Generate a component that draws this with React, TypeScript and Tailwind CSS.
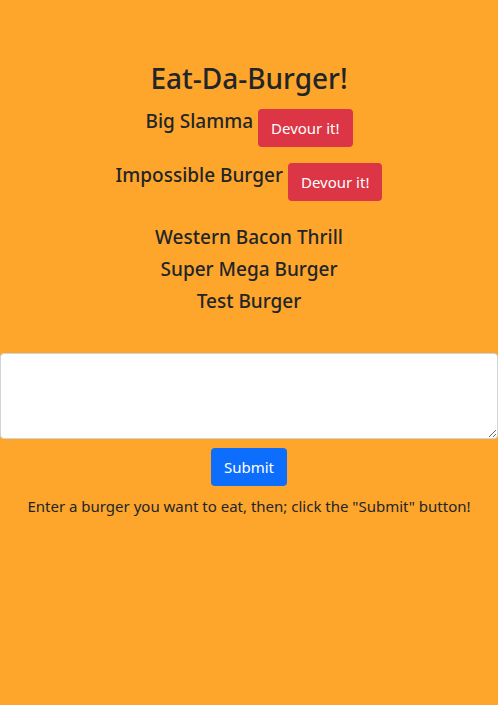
import React from "react";

const eaten = ["Western Bacon Thrill", "Super Mega Burger", "Test Burger"];
const uneaten = ["Big Slamma", "Impossible Burger"];

export default function App() {
  return (
    <div
      className="min-h-[705px] bg-[#fea62b] text-[#212529] text-center pt-[58px]"
      style={{ fontFamily: '"Noto Sans", "Open Sans", sans-serif' }}
    >
      <h1 className="text-[28px] leading-[40px] font-medium mb-[11px]">Eat-Da-Burger!</h1>
      <div>
        {uneaten.map((b) => (
          <div key={b} className="flex justify-center items-start mb-[16px]">
            <span className="text-[19px] leading-[24px] font-medium">{b}</span>
            <button className="ml-[5px] bg-[#dc3545] text-white text-[15px] leading-[24px] px-[13px] py-[7px] rounded-[4px]">
              Devour it!
            </button>
          </div>
        ))}
      </div>
      <div className="mt-[20px]">
        {eaten.map((b) => (
          <div key={b} className="text-[19px] leading-[32px] font-medium">
            {b}
          </div>
        ))}
      </div>
      <div className="mt-[36px]">
        <textarea className="block w-full h-[86px] bg-white border border-[#ced4da] rounded-[4px]" />
        <button className="mt-[9px] bg-[#0d6efd] text-white text-[15px] leading-[24px] px-[13px] py-[7px] rounded-[4px]">
          Submit
        </button>
        <p className="mt-[8px] text-[15px] leading-[24px]">
          Enter a burger you want to eat, then; click the "Submit" button!
        </p>
      </div>
    </div>
  );
}
